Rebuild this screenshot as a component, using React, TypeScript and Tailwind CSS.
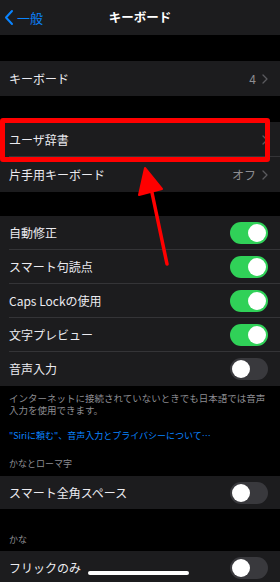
import React from "react";

const font = { fontFamily: '"Noto Sans CJK JP", "Noto Sans", sans-serif' };

function Chevron() {
  return (
    <svg width="6" height="10" viewBox="0 0 6 10" className="ml-[6px]">
      <path d="M1 1l4 4-4 4" fill="none" stroke="#5a5a5e" strokeWidth="1.3" strokeLinecap="round" strokeLinejoin="round" />
    </svg>
  );
}

function Toggle({ on }: { on: boolean }) {
  return (
    <div className={`flex h-[22px] w-[38px] items-center rounded-full p-[2px] ${on ? "justify-end bg-[#30d158]" : "justify-start bg-[#39393d]"}`}>
      <div className="h-[18px] w-[18px] rounded-full bg-white" />
    </div>
  );
}

function Row({ label, value, link, toggle, last, h = "h-[35px]" }: { label: string; value?: string; link?: boolean; toggle?: boolean; last?: boolean; h?: string }) {
  return (
    <div className={`relative flex ${h} items-center justify-between bg-[#1c1c1e] pl-[9px] pr-[12px]`}>
      <span className="text-[12px] text-[#ebebf0]">{label}</span>
      <div className="flex items-center">
        {value && <span className="text-[12px] text-[#8d8d92]">{value}</span>}
        {link && <Chevron />}
        {toggle !== undefined && <Toggle on={toggle} />}
      </div>
      {!last && <div className="absolute bottom-0 left-[9px] right-0 h-px bg-[#343437]" />}
    </div>
  );
}

export default function App() {
  return (
    <div className="relative h-[582px] w-[280px] overflow-hidden bg-black" style={font}>
      <div className="relative flex h-[35px] items-center justify-center bg-[#1c1c1e]">
        <div className="absolute left-[4px] flex items-center text-[#0a84ff]">
          <svg width="10" height="17" viewBox="0 0 10 17">
            <path d="M8 2L2 8.5l6 6.5" fill="none" stroke="#0a84ff" strokeWidth="2" strokeLinecap="round" strokeLinejoin="round" />
          </svg>
          <span className="ml-[3px] text-[13px]">一般</span>
        </div>
        <span className="text-[12.5px] font-bold text-white">キーボード</span>
      </div>

      <div className="h-[26px]" />
      <Row label="キーボード" value="4" link last />

      <div className="h-[26px]" />
      <Row label="ユーザ辞書" link />
      <Row label="片手用キーボード" value="オフ" link last />

      <div className="h-[24px]" />
      <Row label="自動修正" toggle h="h-[34px]" />
      <Row label="スマート句読点" toggle h="h-[34px]" />
      <Row label="Caps Lockの使用" toggle h="h-[34px]" />
      <Row label="文字プレビュー" toggle h="h-[34px]" />
      <Row label="音声入力" toggle={false} last h="h-[34px]" />

      <p className="px-[9px] pt-[6px] text-[9.5px] leading-[12px] text-[#8d8d92]">
        インターネットに接続されていないときでも日本語では音声入力を使用できます。
      </p>
      <p className="mt-[14px] px-[9px] text-[9px] leading-[12px] text-[#0a84ff]">
        "Siriに頼む"、音声入力とプライバシーについて…
      </p>

      <p className="mt-[16px] px-[9px] text-[9px] leading-[12px] text-[#8d8d92]">かなとローマ字</p>
      <div className="h-[6px]" />
      <Row label="スマート全角スペース" toggle={false} last h="h-[33px]" />

      <p className="mt-[25px] px-[9px] text-[9px] leading-[12px] text-[#8d8d92]">かな</p>
      <div className="h-[5px]" />
      <Row label="フリックのみ" toggle={false} last h="h-[34px]" />

      {/* annotation overlay */}
      <div className="absolute left-0 top-[118px] h-[44px] w-[270px] rounded-[3px] border-[5px] border-[#ff0000]" />
      <svg className="absolute left-0 top-0" width="280" height="582" viewBox="0 0 280 582">
        <path d="M167 264L151 188" stroke="#ff0000" strokeWidth="3.5" strokeLinecap="round" />
        <path d="M145 168L139 195L162 189Z" fill="#ff0000" stroke="#ff0000" strokeWidth="2" strokeLinejoin="round" />
      </svg>
      <div className="absolute left-[88px] top-[571px] h-[4px] w-[101px] rounded-full bg-white" />
    </div>
  );
}
